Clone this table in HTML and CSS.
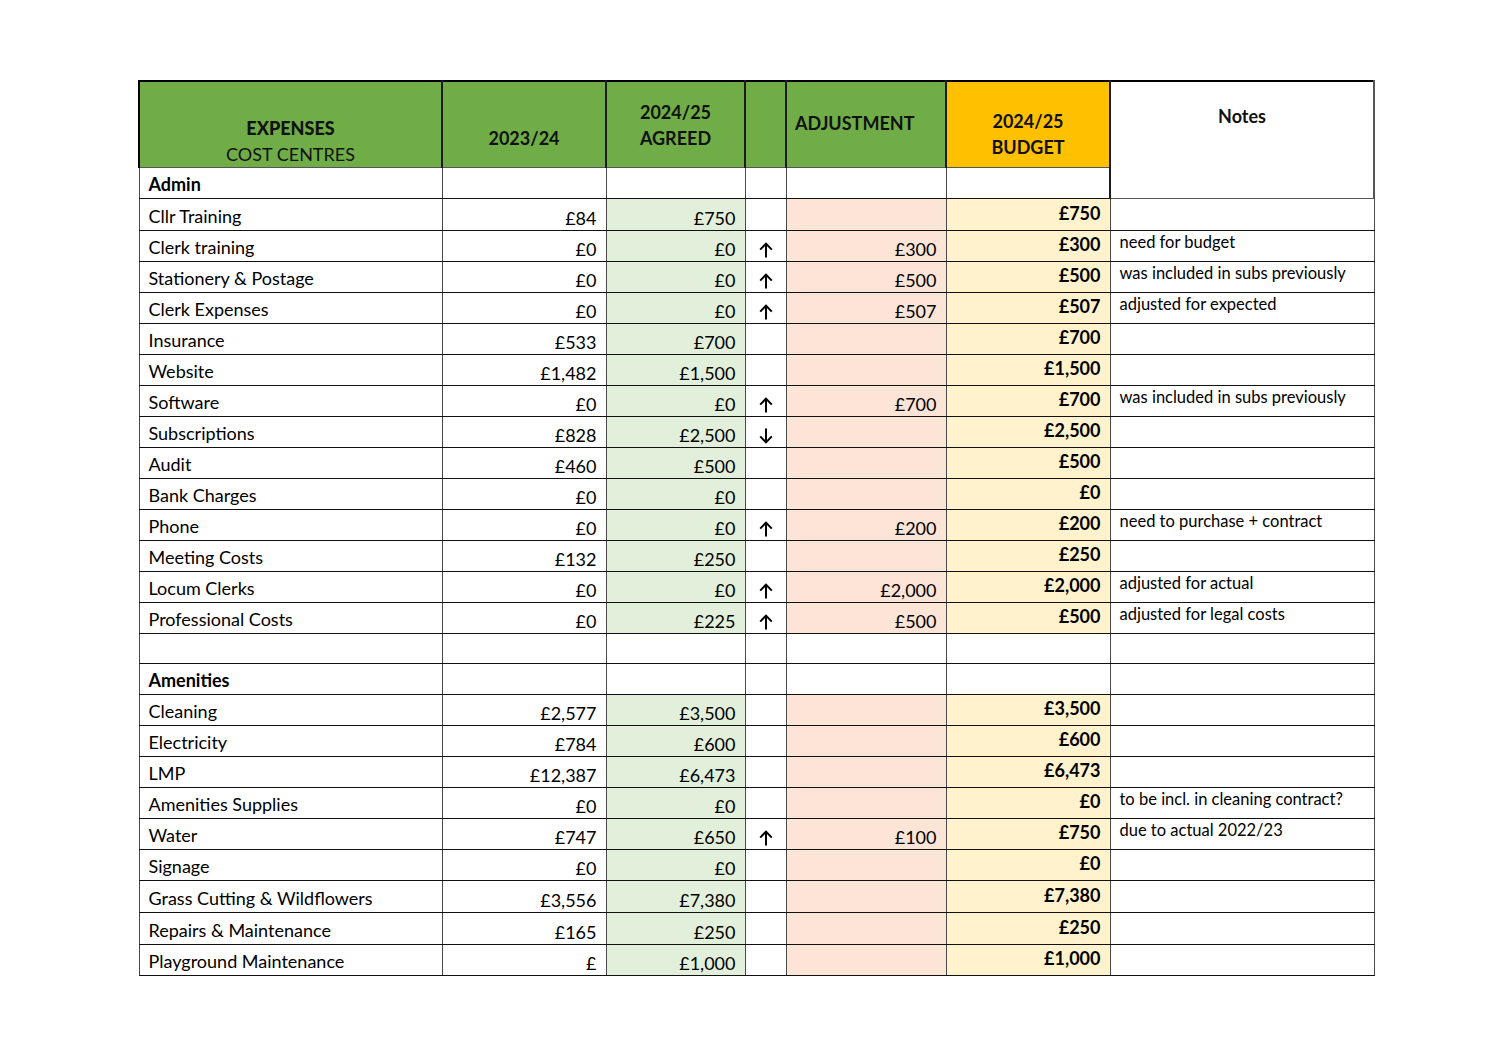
FILE: index.html
```html
<!DOCTYPE html>
<html lang="en">
<head>
<meta charset="utf-8">
<title>Expenses Budget 2024/25</title>
<link rel="stylesheet" href="styles.css">
</head>
<body>
<div class="page">
<table class="sheet">
  <colgroup>
    <col class="c-lbl"><col class="c-y"><col class="c-agr"><col class="c-arr"><col class="c-adj"><col class="c-bud"><col class="c-notes">
  </colgroup>
  <thead>
    <tr class="head">
      <th class="h-exp"><b>EXPENSES</b><br><span class="reg">COST CENTRES</span></th>
      <th class="h-y">2023/24</th>
      <th class="h-agr">2024/25<br>AGREED</th>
      <th class="h-arr"></th>
      <th class="h-adj">ADJUSTMENT</th>
      <th class="h-bud">2024/25<br>BUDGET</th>
      <th class="h-notes" rowspan="2">Notes</th>
    </tr>
    <tr class="sec">
      <td class="lbl">Admin</td><td></td><td></td><td></td><td></td><td></td>
    </tr>
  </thead>
  <tbody>
    <tr class="tall"><td class="lbl">Cllr Training</td><td class="num">£84</td><td class="num agr">£750</td><td class="arr"></td><td class="num adj"></td><td class="bud">£750</td><td class="note"></td></tr>
    <tr><td class="lbl">Clerk training</td><td class="num">£0</td><td class="num agr">£0</td><td class="arr"><svg class="ico" viewBox="0 0 14 16"><path d="M7 15.5V1.6M1.2 7.6L7 1.6L12.8 7.6"/></svg></td><td class="num adj">£300</td><td class="bud">£300</td><td class="note">need for budget</td></tr>
    <tr><td class="lbl">Stationery &amp; Postage</td><td class="num">£0</td><td class="num agr">£0</td><td class="arr"><svg class="ico" viewBox="0 0 14 16"><path d="M7 15.5V1.6M1.2 7.6L7 1.6L12.8 7.6"/></svg></td><td class="num adj">£500</td><td class="bud">£500</td><td class="note">was included in subs previously</td></tr>
    <tr><td class="lbl">Clerk Expenses</td><td class="num">£0</td><td class="num agr">£0</td><td class="arr"><svg class="ico" viewBox="0 0 14 16"><path d="M7 15.5V1.6M1.2 7.6L7 1.6L12.8 7.6"/></svg></td><td class="num adj">£507</td><td class="bud">£507</td><td class="note">adjusted for expected</td></tr>
    <tr><td class="lbl">Insurance</td><td class="num">£533</td><td class="num agr">£700</td><td class="arr"></td><td class="num adj"></td><td class="bud">£700</td><td class="note"></td></tr>
    <tr><td class="lbl">Website</td><td class="num">£1,482</td><td class="num agr">£1,500</td><td class="arr"></td><td class="num adj"></td><td class="bud">£1,500</td><td class="note"></td></tr>
    <tr><td class="lbl">Software</td><td class="num">£0</td><td class="num agr">£0</td><td class="arr"><svg class="ico" viewBox="0 0 14 16"><path d="M7 15.5V1.6M1.2 7.6L7 1.6L12.8 7.6"/></svg></td><td class="num adj">£700</td><td class="bud">£700</td><td class="note">was included in subs previously</td></tr>
    <tr><td class="lbl">Subscriptions</td><td class="num">£828</td><td class="num agr">£2,500</td><td class="arr"><svg class="ico" viewBox="0 0 14 16"><path d="M7 0.5V14.4M1.2 8.4L7 14.4L12.8 8.4"/></svg></td><td class="num adj"></td><td class="bud">£2,500</td><td class="note"></td></tr>
    <tr><td class="lbl">Audit</td><td class="num">£460</td><td class="num agr">£500</td><td class="arr"></td><td class="num adj"></td><td class="bud">£500</td><td class="note"></td></tr>
    <tr><td class="lbl">Bank Charges</td><td class="num">£0</td><td class="num agr">£0</td><td class="arr"></td><td class="num adj"></td><td class="bud">£0</td><td class="note"></td></tr>
    <tr><td class="lbl">Phone</td><td class="num">£0</td><td class="num agr">£0</td><td class="arr"><svg class="ico" viewBox="0 0 14 16"><path d="M7 15.5V1.6M1.2 7.6L7 1.6L12.8 7.6"/></svg></td><td class="num adj">£200</td><td class="bud">£200</td><td class="note">need to purchase + contract</td></tr>
    <tr><td class="lbl">Meeting Costs</td><td class="num">£132</td><td class="num agr">£250</td><td class="arr"></td><td class="num adj"></td><td class="bud">£250</td><td class="note"></td></tr>
    <tr><td class="lbl">Locum Clerks</td><td class="num">£0</td><td class="num agr">£0</td><td class="arr"><svg class="ico" viewBox="0 0 14 16"><path d="M7 15.5V1.6M1.2 7.6L7 1.6L12.8 7.6"/></svg></td><td class="num adj">£2,000</td><td class="bud">£2,000</td><td class="note">adjusted for actual</td></tr>
    <tr><td class="lbl">Professional Costs</td><td class="num">£0</td><td class="num agr">£225</td><td class="arr"><svg class="ico" viewBox="0 0 14 16"><path d="M7 15.5V1.6M1.2 7.6L7 1.6L12.8 7.6"/></svg></td><td class="num adj">£500</td><td class="bud">£500</td><td class="note">adjusted for legal costs</td></tr>
    <tr class="blank"><td></td><td></td><td></td><td></td><td></td><td></td><td></td></tr>
    <tr class="sec"><td class="lbl">Amenities</td><td></td><td></td><td></td><td></td><td></td><td></td></tr>
    <tr><td class="lbl">Cleaning</td><td class="num">£2,577</td><td class="num agr">£3,500</td><td class="arr"></td><td class="num adj"></td><td class="bud">£3,500</td><td class="note"></td></tr>
    <tr><td class="lbl">Electricity</td><td class="num">£784</td><td class="num agr">£600</td><td class="arr"></td><td class="num adj"></td><td class="bud">£600</td><td class="note"></td></tr>
    <tr><td class="lbl">LMP</td><td class="num">£12,387</td><td class="num agr">£6,473</td><td class="arr"></td><td class="num adj"></td><td class="bud">£6,473</td><td class="note"></td></tr>
    <tr><td class="lbl">Amenities Supplies</td><td class="num">£0</td><td class="num agr">£0</td><td class="arr"></td><td class="num adj"></td><td class="bud">£0</td><td class="note">to be incl. in cleaning contract?</td></tr>
    <tr><td class="lbl">Water</td><td class="num">£747</td><td class="num agr">£650</td><td class="arr"><svg class="ico" viewBox="0 0 14 16"><path d="M7 15.5V1.6M1.2 7.6L7 1.6L12.8 7.6"/></svg></td><td class="num adj">£100</td><td class="bud">£750</td><td class="note">due to actual 2022/23</td></tr>
    <tr><td class="lbl">Signage</td><td class="num">£0</td><td class="num agr">£0</td><td class="arr"></td><td class="num adj"></td><td class="bud">£0</td><td class="note"></td></tr>
    <tr class="tall"><td class="lbl">Grass Cutting &amp; Wildflowers</td><td class="num">£3,556</td><td class="num agr">£7,380</td><td class="arr"></td><td class="num adj"></td><td class="bud">£7,380</td><td class="note"></td></tr>
    <tr class="tall"><td class="lbl">Repairs &amp; Maintenance</td><td class="num">£165</td><td class="num agr">£250</td><td class="arr"></td><td class="num adj"></td><td class="bud">£250</td><td class="note"></td></tr>
    <tr><td class="lbl">Playground Maintenance</td><td class="num">£</td><td class="num agr">£1,000</td><td class="arr"></td><td class="num adj"></td><td class="bud">£1,000</td><td class="note"></td></tr>
  </tbody>
</table>
</div>
</body>
</html>
```

FILE: styles.css
```css
html, body {
  margin: 0;
  padding: 0;
  background: #ffffff;
}

.page {
  padding: 80px 0 0 138px;
}

.sheet {
  border-collapse: collapse;
  table-layout: fixed;
  width: 1235px;
  font-family: Lato, "Liberation Sans", sans-serif;
  font-size: 18px;
  line-height: 20px;
  color: #000;
  border-right: 1px solid #000;
  border-bottom: 1px solid #000;
}

.c-lbl { width: 303px; }
.c-y { width: 164px; }
.c-agr { width: 139px; }
.c-arr { width: 41px; }
.c-adj { width: 160px; }
.c-bud { width: 164px; }
.c-notes { width: 264px; }

.sheet td {
  height: 31px;
  box-sizing: border-box;
  padding: 0 9px 4px 9px;
  vertical-align: bottom;
  white-space: nowrap;
  border-left: 1px solid #4a4a4a;
  border-right: 1px solid #4a4a4a;
  border-top: 1px solid #111;
  border-bottom: 1px solid #111;
}

/* header */
.head th {
  height: 86px;
  box-sizing: border-box;
  padding: 0;
  font-weight: 700;
  font-size: 18px;
  line-height: 26px;
  color: #111;
  background: #70ad47;
  border-top: 2px solid #000;
  border-left: 2px solid #1c1c1c;
  border-right: 2px solid #1c1c1c;
  border-bottom: 1px solid #555;
  text-align: center;
  vertical-align: bottom;
}

.head .reg { font-weight: 400; }
.head .h-exp { border-left: 2px solid #000; padding-bottom: 0; }
.head .h-y { padding-bottom: 16px; }
.head .h-agr { padding-bottom: 16px; }
.head .h-adj { text-align: left; padding-left: 8px; vertical-align: middle; padding-bottom: 2px; }
.head .h-bud { background: #ffc000; padding-bottom: 7px; }
.head .h-notes {
  height: 117px;
  background: #ffffff;
  vertical-align: top;
  padding-top: 21px;
  border-right: 2px solid #555;
  border-bottom: 1px solid #555;
}

.sec .lbl { font-weight: 700; }
.sec td { height: 31px; }
.blank td { height: 30px; }
.sheet .tall td { height: 32px; }

.lbl { text-align: left; }
.num { text-align: right; padding-bottom: 2px !important; }
.agr { background: #e2efda; }
.adj { background: #fce4d6; }
.bud {
  background: #fff2cc;
  text-align: right;
  font-weight: 700;
  padding-bottom: 7px !important;
}
.note {
  text-align: left;
  font-size: 16.5px;
  padding-left: 9px !important;
  padding-bottom: 9px !important;
}
.arr {
  text-align: center;
  padding: 0 0 3px 0 !important;
  line-height: 0;
}
.ico {
  width: 14px;
  height: 16px;
  fill: none;
  stroke: #000;
  stroke-width: 2;
  stroke-linecap: butt;
  display: inline-block;
}
```
